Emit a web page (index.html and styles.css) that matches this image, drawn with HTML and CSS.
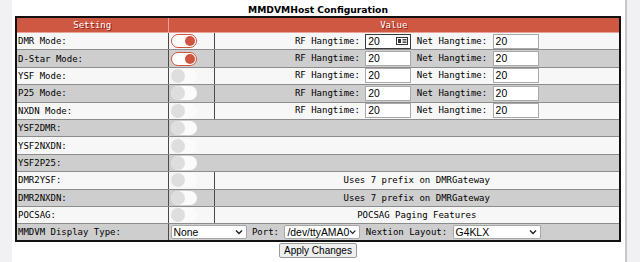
FILE: index.html
```html
<!DOCTYPE html>
<html>
<head>
<meta charset="utf-8">
<link rel="stylesheet" href="styles.css">
</head>
<body>
<div class="page">
  <div class="title">MMDVMHost Configuration</div>
  <table class="cfg">
    <colgroup><col class="c1"><col class="c2"><col></colgroup>
    <tr class="head"><th>Setting</th><th colspan="2">Value</th></tr>
    <tr>
      <td class="lbl">DMR Mode:</td>
      <td class="tgc"><span class="tg on"><span class="knob"></span></span></td>
      <td class="val">RF Hangtime: <span class="inp focus">20<svg class="af" width="12" height="8" viewBox="0 0 12 8"><rect x="0.5" y="0.5" width="11" height="7" fill="#fff" stroke="#333"/><rect x="2" y="2" width="3" height="4" fill="#333"/><path d="M6.5 2.5h4M6.5 4h4M6.5 5.5h4" stroke="#333" stroke-width="0.9"/></svg></span> Net Hangtime: <span class="inp">20</span></td>
    </tr>
    <tr>
      <td class="lbl">D-Star Mode:</td>
      <td class="tgc"><span class="tg on"><span class="knob"></span></span></td>
      <td class="val">RF Hangtime: <span class="inp">20</span> Net Hangtime: <span class="inp">20</span></td>
    </tr>
    <tr>
      <td class="lbl">YSF Mode:</td>
      <td class="tgc"><span class="tg off"><span class="knob"></span></span></td>
      <td class="val">RF Hangtime: <span class="inp">20</span> Net Hangtime: <span class="inp">20</span></td>
    </tr>
    <tr>
      <td class="lbl">P25 Mode:</td>
      <td class="tgc"><span class="tg off"><span class="knob"></span></span></td>
      <td class="val">RF Hangtime: <span class="inp">20</span> Net Hangtime: <span class="inp">20</span></td>
    </tr>
    <tr>
      <td class="lbl">NXDN Mode:</td>
      <td class="tgc"><span class="tg off"><span class="knob"></span></span></td>
      <td class="val">RF Hangtime: <span class="inp">20</span> Net Hangtime: <span class="inp">20</span></td>
    </tr>
    <tr>
      <td class="lbl">YSF2DMR:</td>
      <td class="tgc" colspan="2"><span class="tg off"><span class="knob"></span></span></td>
    </tr>
    <tr>
      <td class="lbl">YSF2NXDN:</td>
      <td class="tgc" colspan="2"><span class="tg off"><span class="knob"></span></span></td>
    </tr>
    <tr>
      <td class="lbl">YSF2P25:</td>
      <td class="tgc" colspan="2"><span class="tg off"><span class="knob"></span></span></td>
    </tr>
    <tr>
      <td class="lbl">DMR2YSF:</td>
      <td class="tgc"><span class="tg off"><span class="knob"></span></span></td>
      <td class="val">Uses 7 prefix on DMRGateway</td>
    </tr>
    <tr>
      <td class="lbl">DMR2NXDN:</td>
      <td class="tgc"><span class="tg off"><span class="knob"></span></span></td>
      <td class="val">Uses 7 prefix on DMRGateway</td>
    </tr>
    <tr>
      <td class="lbl">POCSAG:</td>
      <td class="tgc"><span class="tg off"><span class="knob"></span></span></td>
      <td class="val">POCSAG Paging Features</td>
    </tr>
    <tr>
      <td class="lbl">MMDVM Display Type:</td>
      <td class="disp" colspan="2"><span class="sel w1">None<svg class="chev" width="8" height="6" viewBox="0 0 8 6"><path d="M1 1.5l3 3 3-3" fill="none" stroke="#222" stroke-width="1.4"/></svg></span> Port: <span class="sel w2">/dev/ttyAMA0<svg class="chev" width="8" height="6" viewBox="0 0 8 6"><path d="M1 1.5l3 3 3-3" fill="none" stroke="#222" stroke-width="1.4"/></svg></span> Nextion Layout: <span class="sel w3">G4KLX<svg class="chev" width="8" height="6" viewBox="0 0 8 6"><path d="M1 1.5l3 3 3-3" fill="none" stroke="#222" stroke-width="1.4"/></svg></span></td>
    </tr>
  </table>
  <div class="actions"><span class="btn">Apply Changes</span></div>
</div>
</body>
</html>
```
FILE: styles.css
```css
html, body {
  margin: 0;
  padding: 0;
  background: #f1f1f4;
}
.page {
  margin-left: 12px;
  width: 606px;
  height: 262px;
  padding: 0 4px 0 3px;
  background: #ffffff;
  border-right: 2px solid #c6c6ca;
}
.title {
  font-family: "DejaVu Sans", Verdana, sans-serif;
  font-weight: bold;
  font-size: 9.2px;
  line-height: 10px;
  text-align: center;
  padding-top: 5px;
  height: 11px;
  color: #000;
}
.cfg {
  width: 606px;
  border-collapse: collapse;
  table-layout: fixed;
  border: 2px solid #111;
  font-family: "DejaVu Sans Mono", monospace;
  font-size: 9px;
  color: #000;
  white-space: nowrap;
}
.c1 { width: 152px; }
.c2 { width: 46px; }
.cfg tr { height: 17.4px; }
.cfg tr:nth-child(odd) { background: #cecece; }
.cfg tr:nth-child(even) { background: #f7f7f7; }
.cfg tr.head { height: 15px; background: #cf5842; }
.cfg th {
  color: #fff;
  font-weight: normal;
  text-shadow: 1px 1px #8b1a10;
  border: 1px solid #e6a498;
  padding: 0;
  line-height: 14px;
}
.cfg td {
  border-top: 1px solid #8c8c8c;
  border-bottom: 1px solid #8c8c8c;
  border-left: 1px solid #4a4a4a;
  border-right: 1px solid #4a4a4a;
  padding: 0;
  vertical-align: middle;
}
.lbl { text-align: left; padding-left: 1px !important; }
.tgc { text-align: left; padding-left: 2px !important; }
.val { text-align: center; }
.disp { text-align: left; padding-left: 2px !important; }
.tg {
  display: inline-flex;
  align-items: center;
  box-sizing: border-box;
  width: 26px;
  height: 14px;
  border-radius: 7px;
  vertical-align: middle;
}
.tg.on {
  background: #fff;
  border: 1.5px solid #d0553f;
  justify-content: flex-end;
  padding-right: 1px;
}
.tg.on .knob {
  width: 10px;
  height: 10px;
  border-radius: 50%;
  background: #d0553f;
}
.tg.off {
  background: #fbfbfb;
  justify-content: flex-start;
}
.tg.off .knob {
  width: 14px;
  height: 14px;
  border-radius: 50%;
  background: #dedede;
}
.inp {
  display: inline-flex;
  align-items: center;
  justify-content: space-between;
  box-sizing: border-box;
  width: 46px;
  height: 15px;
  padding: 0 2px 0 2px;
  background: #fff;
  border: 1px solid #a8a8a8;
  font-family: "Liberation Sans", Arial, sans-serif;
  font-size: 10.4px;
  vertical-align: middle;
  text-align: left;
}
.inp.focus { border-color: #3a3a3a; }
.af { display: block; }
.sel {
  display: inline-flex;
  align-items: center;
  justify-content: space-between;
  box-sizing: border-box;
  height: 14px;
  padding: 0 3px 0 2px;
  background: #fff;
  border: 1px solid #a8a8a8;
  border-radius: 2px;
  font-family: "Liberation Sans", Arial, sans-serif;
  font-size: 10.4px;
  vertical-align: middle;
}
.w1 { width: 76px; }
.w2 { width: 76px; }
.w3 { width: 88px; }
.chev { display: block; }
.actions {
  display: flex;
  justify-content: center;
  padding-top: 1px;
}
.btn {
  display: block;
  box-sizing: border-box;
  width: 78px;
  height: 15px;
  line-height: 13px;
  background: #efefef;
  border: 1px solid #9a9a9a;
  border-radius: 2px;
  font-family: "Liberation Sans", Arial, sans-serif;
  font-size: 10px;
  text-align: center;
  color: #000;
}
```
